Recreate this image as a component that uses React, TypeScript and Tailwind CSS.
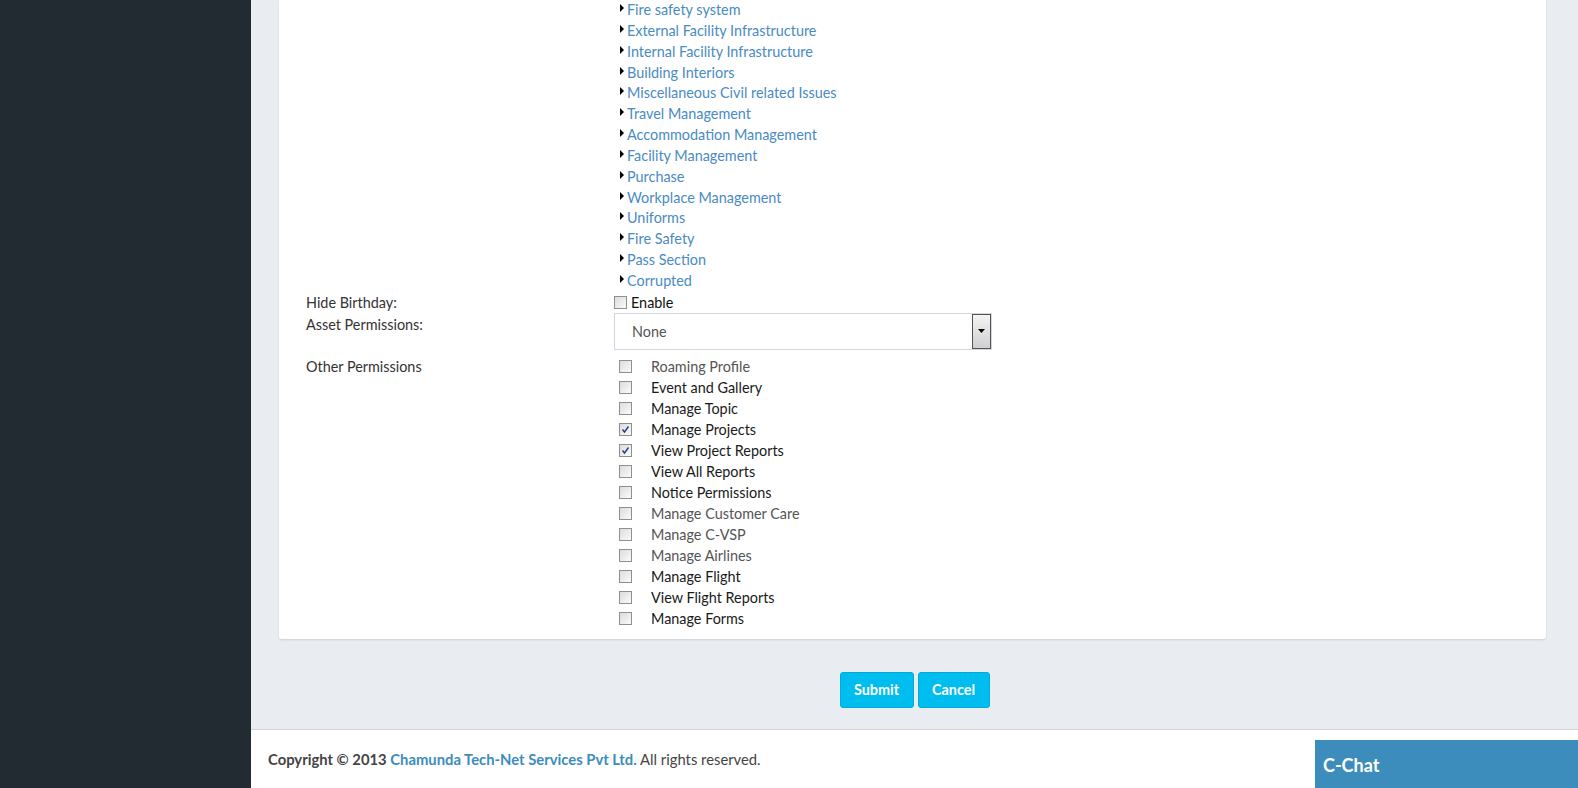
const TREE = [
  'Fire safety system',
  'External Facility Infrastructure',
  'Internal Facility Infrastructure',
  'Building Interiors',
  'Miscellaneous Civil related Issues',
  'Travel Management',
  'Accommodation Management',
  'Facility Management',
  'Purchase',
  'Workplace Management',
  'Uniforms',
  'Fire Safety',
  'Pass Section',
  'Corrupted',
];

const PERMS: { label: string; checked?: boolean; muted?: boolean }[] = [
  { label: 'Roaming Profile', muted: true },
  { label: 'Event and Gallery' },
  { label: 'Manage Topic' },
  { label: 'Manage Projects', checked: true },
  { label: 'View Project Reports', checked: true },
  { label: 'View All Reports' },
  { label: 'Notice Permissions' },
  { label: 'Manage Customer Care', muted: true },
  { label: 'Manage C-VSP', muted: true },
  { label: 'Manage Airlines', muted: true },
  { label: 'Manage Flight' },
  { label: 'View Flight Reports' },
  { label: 'Manage Forms' },
];

function Checkbox({ checked }: { checked?: boolean }) {
  return (
    <span className="relative inline-block w-[13px] h-[13px] border border-[#8e8f8f] bg-gradient-to-br from-[#dcdcdc] to-[#fbfbfb] shrink-0">
      {checked && (
        <svg viewBox="0 0 11 11" className="absolute inset-0 w-[11px] h-[11px]">
          <path d="M2.5 5.5 L4.5 8 L8.5 2.5" fill="none" stroke="#2c3d7a" strokeWidth="1.4" />
        </svg>
      )}
    </span>
  );
}

export default function App() {
  return (
    <div className="flex h-[788px] w-full overflow-hidden font-['Lato','Liberation_Sans',sans-serif] text-[14.4px]">
      <div className="w-[251px] shrink-0 bg-[#212b31]" />
      <div className="relative flex-1 flex flex-col bg-[#e9edf1]">
        {/* form card */}
        <div className="ml-[28px] mr-[32px] h-[639px] bg-white rounded-b-[3px] shadow-[0_1px_2px_rgba(0,0,0,0.12)]">
          <div className="grid grid-cols-[308px_1fr] pl-[27px]">
            <div />
            <ul>
              {TREE.map(t => (
                <li key={t} className="flex items-start h-[20.85px] leading-[20.85px]">
                  <svg viewBox="0 0 4 8" className="w-[4px] h-[8px] mt-[4px] ml-[6px] mr-[3px]">
                    <path d="M0 0 L4 4 L0 8 Z" fill="#000" />
                  </svg>
                  <span className="text-[#4a8bc3]">{t}</span>
                </li>
              ))}
            </ul>

            <div className="text-[#333] leading-[21px] h-[21px]">Hide Birthday:</div>
            <div className="flex items-center h-[21px] gap-[4px] text-[#111]">
              <Checkbox />
              <span>Enable</span>
            </div>

            <div className="text-[#333] leading-[21px] pt-[1px]">Asset Permissions:</div>
            <div className="flex">
              <div className="flex w-[378px] h-[37px] border border-[#d2d6de] text-[#555]">
                <span className="flex-1 pl-[17px] leading-[35px]">None</span>
                <span className="w-[19px] h-[35px] flex items-center justify-center border border-[#555] bg-gradient-to-b from-[#f4f4f4] to-[#d0d0d0]">
                  <svg viewBox="0 0 7 4" className="w-[7px] h-[4px]">
                    <path d="M0 0 H7 L3.5 4 Z" fill="#000" />
                  </svg>
                </span>
              </div>
            </div>

            <div className="text-[#333] leading-[21px] mt-[6px]">Other Permissions</div>
            <ul className="mt-[6px] pl-[5px]">
              {PERMS.map(p => (
                <li key={p.label} className="flex items-center h-[21px]">
                  <Checkbox checked={p.checked} />
                  <span className={`ml-[19px] ${p.muted ? 'text-[#555]' : 'text-[#1a1a1a]'}`}>{p.label}</span>
                </li>
              ))}
            </ul>
          </div>
        </div>

        {/* actions */}
        <div className="flex justify-center gap-[4px] mt-[33px]">
          <button className="w-[74px] h-[36px] rounded-[3px] bg-[#00bdef] border border-[#00acd6] text-white font-bold">Submit</button>
          <button className="w-[72px] h-[36px] rounded-[3px] bg-[#00bdef] border border-[#00acd6] text-white font-bold">Cancel</button>
        </div>

        {/* footer */}
        <div className="mt-auto h-[59px] bg-white border-t border-[#d2d6de] flex items-center pl-[17px] text-[14.8px] text-[#444]">
          <span>
            <b>Copyright © 2013 </b>
            <b className="text-[#3c8dbc]">Chamunda Tech-Net Services Pvt Ltd.</b> All rights reserved.
          </span>
        </div>

        <div className="absolute right-0 bottom-0 w-[263px] h-[48px] bg-[#3c8dbc] text-white font-bold text-[18px] pl-[8px] pt-[12px]">
          C-Chat
        </div>
      </div>
    </div>
  );
}
